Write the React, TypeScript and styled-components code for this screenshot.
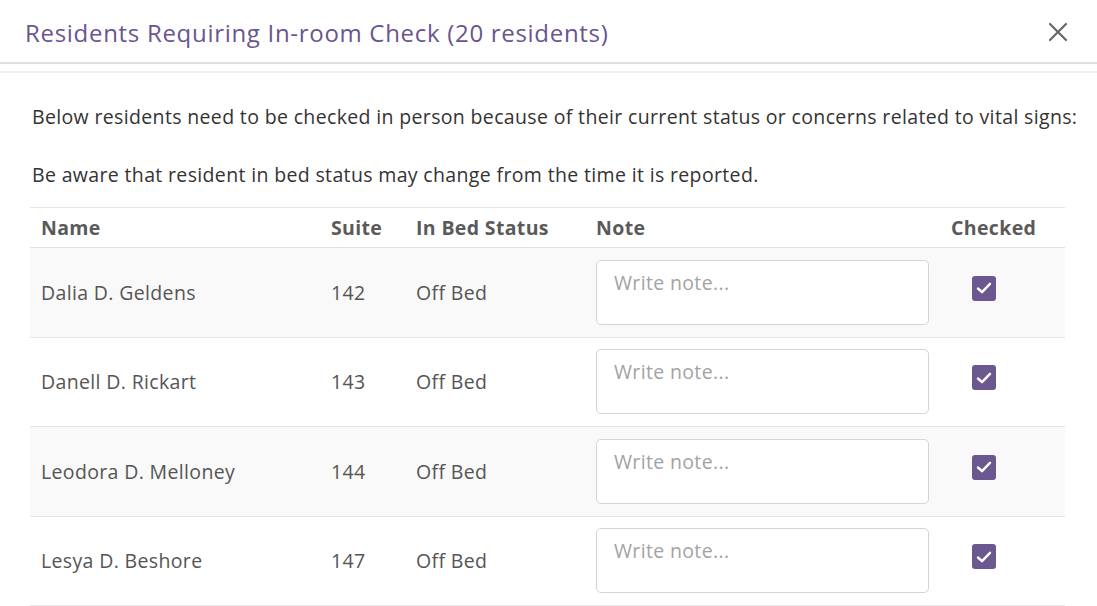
import styled, { createGlobalStyle } from 'styled-components'

const residents = [
  { name: 'Dalia D. Geldens', suite: '142', status: 'Off Bed' },
  { name: 'Danell D. Rickart', suite: '143', status: 'Off Bed' },
  { name: 'Leodora D. Melloney', suite: '144', status: 'Off Bed' },
  { name: 'Lesya D. Beshore', suite: '147', status: 'Off Bed' },
]

const GlobalStyle = createGlobalStyle`
  html, body {
    margin: 0;
    padding: 0;
    background: #fff;
    overflow: hidden;
  }
  body {
    font-family: 'Open Sans', 'Liberation Sans', sans-serif;
    color: #444;
  }
`

const App = () => {
  return (
    <>
      <GlobalStyle />
      <Dialog>
        <Header>
          <Title>Residents Requiring In-room Check (20 residents)</Title>
          <CloseButton aria-label="Close">
            <svg width="20" height="20" viewBox="0 0 20 20">
              <path d="M2 2 L18 18 M18 2 L2 18" stroke="#666" strokeWidth="2.2" strokeLinecap="round" />
            </svg>
          </CloseButton>
        </Header>

        <Body>
          <Intro>
            Below residents need to be checked in person because of their current status or concerns related to vital signs:
          </Intro>
          <Intro>Be aware that resident in bed status may change from the time it is reported.</Intro>

          <Table>
            <HeadRow>
              <HeadCell>Name</HeadCell>
              <HeadCell>Suite</HeadCell>
              <HeadCell>In Bed Status</HeadCell>
              <HeadCell>Note</HeadCell>
              <HeadCell>Checked</HeadCell>
            </HeadRow>
            {residents.map((r, i) => (
              <Row key={r.suite} striped={i % 2 === 0}>
                <Cell>{r.name}</Cell>
                <Cell>{r.suite}</Cell>
                <Cell>{r.status}</Cell>
                <NoteCell>
                  <NoteInput placeholder="Write note..." />
                </NoteCell>
                <CheckCell>
                  <CheckBox role="checkbox" aria-checked="true">
                    <svg width="18" height="18" viewBox="0 0 18 18">
                      <path d="M3 9.5 L7 13.2 L15 4.8" fill="none" stroke="#fff" strokeWidth="2.4" strokeLinecap="round" strokeLinejoin="round" />
                    </svg>
                  </CheckBox>
                </CheckCell>
              </Row>
            ))}
          </Table>
        </Body>
      </Dialog>
    </>
  )
}

export default App

const Dialog = styled.div`
  width: 1097px;
  height: 606px;
  background: #fff;
`

const Header = styled.div`
  display: flex;
  align-items: center;
  justify-content: space-between;
  height: 64px;
  padding: 2px 27px 0 25px;
  box-sizing: border-box;
  border-bottom: 2px solid #dedede;
`

const Title = styled.h2`
  margin: 0;
  font-size: 24px;
  font-weight: 400;
  color: #6a5590;
  letter-spacing: 0.7px;
`

const CloseButton = styled.button`
  display: flex;
  align-items: center;
  justify-content: center;
  width: 24px;
  height: 24px;
  padding: 0;
  border: none;
  background: none;
  cursor: pointer;
`

const Body = styled.div`
  margin-top: 7px;
  border-top: 2px solid #efefef;
  padding: 31px 32px 0 30px;
`

const Intro = styled.p`
  margin: 0 0 32px 2px;
  font-size: 19.5px;
  letter-spacing: 0.35px;
  line-height: 26px;
  color: #333;
  white-space: nowrap;

  &:last-of-type {
    margin-bottom: 19px;
  }
`

const Table = styled.div`
  width: 1035px;
  border-top: 1px solid #e6e6e6;
`

const HeadRow = styled.div`
  display: grid;
  grid-template-columns: 290px 85px 180px 355px 1fr;
  height: 40px;
  align-items: center;
  border-bottom: 1px solid #e3e3e3;
  box-sizing: border-box;
`

const HeadCell = styled.div`
  padding-left: 11px;
  font-size: 19.5px;
  letter-spacing: 0.35px;
  font-weight: 700;
  color: #5a5a5a;
`

const Row = styled.div<{ striped: boolean }>`
  display: grid;
  grid-template-columns: 290px 85px 180px 355px 1fr;
  height: 89.5px;
  align-items: center;
  box-sizing: border-box;
  border-bottom: 1px solid #e6e6e6;
  background: ${(p) => (p.striped ? '#f9f9f9' : '#fff')};
`

const Cell = styled.div`
  padding-left: 11px;
  font-size: 19.5px;
  letter-spacing: 0.35px;
  color: #555;
`

const NoteCell = styled.div`
  padding-left: 11px;
  display: flex;
`

const NoteInput = styled.textarea`
  width: 333px;
  height: 65px;
  box-sizing: border-box;
  padding: 10px 17px;
  border: 1px solid #d4d4d4;
  border-radius: 5px;
  background: #fff;
  resize: none;
  font-family: 'Open Sans', 'Liberation Sans', sans-serif;
  font-size: 19.5px;
  letter-spacing: 0.35px;
  line-height: 24px;
  color: #444;

  &::placeholder {
    color: #a3a3a3;
  }
`

const CheckCell = styled.div`
  padding-left: 32px;
  margin-bottom: 8px;
  display: flex;
`

const CheckBox = styled.div`
  width: 24px;
  height: 25px;
  border-radius: 3px;
  background: #6b5890;
  display: flex;
  align-items: center;
  justify-content: center;
`
